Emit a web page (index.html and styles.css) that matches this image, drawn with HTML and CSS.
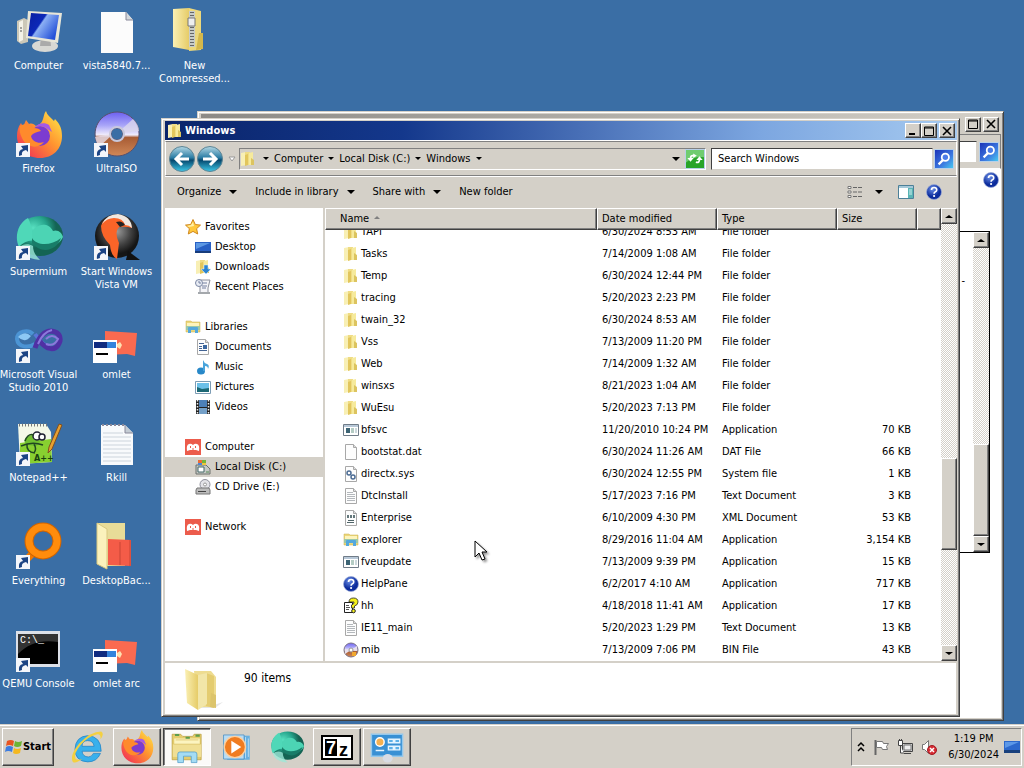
FILE: index.html
```html
<!DOCTYPE html>
<html lang="en">
<head>
    <meta charset="UTF-8">
    <meta name="viewport" content="width=device-width, initial-scale=1.0">
    <title>Windows</title>
    <link rel="stylesheet" href="styles.css">
</head>
<body>
    <!-- Shared icons -->
    <svg class="sprite" aria-hidden="true">
        <defs>
            <linearGradient id="gFolder" x1="0" x2="1"><stop offset="0" stop-color="#faf0b4"/><stop offset="1" stop-color="#e6cc68"/></linearGradient>
            <linearGradient id="gScreen" x1="0" x2="1" y2=".6"><stop offset="0" stop-color="#0a1fa0"/><stop offset=".45" stop-color="#0c28b8"/><stop offset=".5" stop-color="#8cb0f4"/><stop offset="1" stop-color="#2450d8"/></linearGradient>
            <linearGradient id="gFox" x1="1" x2="0" y2="1"><stop offset="0" stop-color="#fff04a"/><stop offset=".45" stop-color="#ff9430"/><stop offset="1" stop-color="#f0205c"/></linearGradient>
            <linearGradient id="gDisc" x2="0" y2="1"><stop offset="0" stop-color="#6c60f0"/><stop offset=".3" stop-color="#a8a4f8"/><stop offset=".52" stop-color="#f0ecfc"/><stop offset=".58" stop-color="#a85c34"/><stop offset="1" stop-color="#d08858"/></linearGradient>
            <radialGradient id="gTeal" cx=".35" cy=".3"><stop offset="0" stop-color="#58e0c0"/><stop offset=".6" stop-color="#26a58c"/><stop offset="1" stop-color="#146454"/></radialGradient>
            <radialGradient id="gDark" cx=".5" cy=".4"><stop offset="0" stop-color="#999"/><stop offset=".6" stop-color="#444"/><stop offset="1" stop-color="#151515"/></radialGradient>
            <linearGradient id="gNav" x2="0" y2="1"><stop offset="0" stop-color="#b4d8e4"/><stop offset=".45" stop-color="#2a7ca4"/><stop offset=".55" stop-color="#06486e"/><stop offset="1" stop-color="#3cc8e8"/></linearGradient>
            <linearGradient id="gFind" x2="1" y2="1"><stop offset="0" stop-color="#1c34b8"/><stop offset=".6" stop-color="#3c78e0"/><stop offset="1" stop-color="#48c8f0"/></linearGradient>
            <radialGradient id="gHelp" cx=".4" cy=".3"><stop offset="0" stop-color="#6c90e8"/><stop offset="1" stop-color="#0c2c9c"/></radialGradient>
        </defs>
        <symbol id="folder" viewBox="0 0 16 16">
            <path d="M1 2l5-1v13l-5 1z" fill="#f8efb4"/><path d="M5 1h5v13H5z" fill="#efdc84"/><path d="M9 2l4-1v13H9z" fill="#f6ea9c"/><path d="M5 4l3-1v11l-3 1z" fill="#e2c65c"/><path d="M11 7l3 2v5h-3z" fill="#dcc460"/>
        </symbol>
        <symbol id="page" viewBox="0 0 16 16"><path d="M2.500.500h8l3 3v12h-11z" fill="#fdfdfd" stroke="#a8a8a8"/><path d="M10.500.500v3h3" fill="#ddd" stroke="#a8a8a8"/></symbol>
        <symbol id="text" viewBox="0 0 16 16"><use href="#page"/><path d="M4 4.500h6M4 6.500h8M4 8.500h8M4 10.500h8M4 12.500h8" stroke="#b4b8bc"/></symbol>
        <symbol id="app" viewBox="0 0 16 16"><path d="M.500 2.500h15v11H.500z" fill="#fff" stroke="#707c88"/><path d="M1 3h14v2H1z" fill="#b8c8d8"/><path d="M3 6h4v5H3z" fill="#3c6474"/><path d="M8 6h3v5H8z" fill="#b4ccc4"/><path d="M12 6h2v5h-2z" fill="#ccd8dc"/></symbol>
        <symbol id="explorer" viewBox="0 0 16 16"><path d="M1 2h5l1 1h8v10H1z" fill="#ecd77c" stroke="#c8ac48" stroke-width=".5"/><path d="M2 4h12v4H2z" fill="#fdf4bc"/><path d="M1 7h14v4H1z" fill="#9cc8a8"/><path d="M3 14V9q0-1 1-1h8q1 0 1 1v5h-3v-3H6v3z" fill="#54a8dc"/></symbol>
        <symbol id="help" viewBox="0 0 16 16"><circle cx="8" cy="8" r="7.500" fill="url(#gHelp)" stroke="#9cacd8" stroke-width=".7"/><path d="M5.500 6q0-2.500 2.600-2.500T10.700 6q0 1.300-1.600 2-1 .5-1 1.700" fill="none" stroke="#fff" stroke-width="1.700"/><circle cx="8.100" cy="12" r="1.100" fill="#fff"/></symbol>
        <symbol id="find" viewBox="0 0 20 20"><path d="M0 0h20v20H0z" fill="url(#gFind)"/><circle cx="11.500" cy="8" r="4" fill="#4c7ce8" stroke="#fff" stroke-width="2"/><path d="M9 11l-5 5" stroke="#fff" stroke-width="2.500"/></symbol>
        <symbol id="omletTile" viewBox="0 0 16 16"><path d="M0 0h16v16H0z" fill="#ec5c4c"/><path d="M2 12q-1-6 2-7 2-1 4 1 2-2 4-1 3 1 2 7l-3-1H5z" fill="#fff"/><path d="M5.500 7v2M10.500 7v2M8 9v2" stroke="#ec5c4c"/></symbol>
        <symbol id="shortcut" viewBox="0 0 14 14"><path d="M0 0h14v14H0z" fill="#f4f6fa"/><path d="M3 13Q2 7 7 6L5 3l7-1v7L10 7Q5 8 6 12z" fill="#1c4484"/></symbol>
        <symbol id="firefox" viewBox="0 0 48 48">
            <path d="M25 47C12 47 2 38 2 25c0-5 1-9 4-13l2 4 3-7 3 4c3-1 5 0 7 2 3-1 6-3 7-7 1-3 1-6 3-8 1 4 4 6 8 10l1-2c5 5 7 10 7 17 0 13-9 22-22 22z" fill="url(#gFox)"/>
            <circle cx="25" cy="25" r="10" fill="#7c3cd0"/><path d="M5 15c4-3 11-2 14 2 3 0 6 1 7 3-4 1-8 2-10 5 1 6 8 8 13 6-6 8-18 5-22-4-2-4-3-8-2-12z" fill="#ff8a2c"/><path d="M20 16c3-4 10-5 14-2l3 7-6-4c-3-2-7-2-11-1z" fill="#a458e8"/>
        </symbol>
        <symbol id="supermium" viewBox="0 0 48 48">
            <ellipse cx="25" cy="22" rx="23" ry="20" fill="url(#gTeal)"/><path d="M13 4C3 9-1 23 4 33c6-7 15-9 23-3C16 24 18 13 13 4z" fill="#4fd8b8"/><path d="M17 20c2-10 16-13 21-3 5-2 9 2 10 6-5 12-23 12-31 4z" fill="#4cd4b4"/><path d="M17 24c5 8 19 8 29 0-4 12-19 17-29 5z" fill="#187c68"/><path d="M4 33c2 7 9 12 21 13-4-4-7-8-7-14-5-3-10-2-14 1z" fill="#9ce8d8" opacity=".8"/>
        </symbol>
        <symbol id="omlet" viewBox="0 0 48 48">
            <path d="M12 14l32 2-2 23-8-2-22 1z" fill="#fa6a50"/><path d="M0 23h24v23H0z" fill="#fff"/><path d="M1 25h13v6H1z" fill="#102c80"/><path d="M14 25h9v6h-9z" fill="#3484dc"/><path d="M3 36h12v2H3z"/><path d="M24 27l3-2 2 3-2 4-3-2z" fill="#ffe0b0"/>
        </symbol>
    </svg>

    <main class="desktop">
        <ul class="icons">
            <li><a class="shortcut" href="#"><svg viewBox="0 0 48 48"><path d="M2 13l7-3 4 2v22l-7 2-4-3z" fill="#ccc8b8"/><path d="M4 14l4-2v20l-4 2z" fill="#f4f2e8"/><path d="M5 20h2M5 23h2" stroke="#555"/><ellipse cx="30" cy="38" rx="13" ry="6" fill="#d8d8d4"/><path d="M26 29h9l1 9H25z" fill="#aaa"/><path d="M13 3l34 2-4 30-32-5z" fill="#e8e6d8"/><path d="M16 5l28 2-4 25-27-4z" fill="url(#gScreen)"/></svg>Computer</a></li>
            <li><a class="shortcut" href="#"><svg viewBox="0 0 48 48"><use href="#firefox"/><use href="#shortcut" x="1" y="32" width="14" height="14"/></svg>Firefox</a></li>
            <li><a class="shortcut" href="#"><svg viewBox="0 0 48 48"><use href="#supermium"/><use href="#shortcut" x="1" y="32" width="14" height="14"/></svg>Supermium</a></li>
            <li><a class="shortcut" href="#"><svg viewBox="0 0 48 48"><path d="M20 27C14 31 3 31 2 22 2 14 13 12 18 17" fill="none" stroke="#4c94d4" stroke-width="4"/><path d="M3 20q7-7 13-1-6 8-13 1z" fill="#8cc8f4"/><path d="M20 17q8 12 14 12" fill="none" stroke="#5878d8" stroke-width="4"/><path d="M20 31Q26 14 36 14 46 15 45 24 42 34 33 31 27 28 25 24" fill="none" stroke="#5030a4" stroke-width="5"/><path d="M31 22q6-6 12 0-4 8-12 5M23 27q5-12 14-14" fill="none" stroke="#8c78dc" stroke-width="2"/><use href="#shortcut" x="1" y="32" width="14" height="14"/></svg>Microsoft Visual Studio 2010</a></li>
            <li><a class="shortcut" href="#"><svg viewBox="0 0 48 48"><path d="M3 4h28l5 8 1 30-32 2z" fill="#f4f8e8"/><path d="M5 23l31-4 1 23-32 2z" fill="#88d030"/><path d="M4 5h28" stroke="#777" stroke-width="3" stroke-dasharray="1 2"/><path d="M10 19q6-6 11-3l4 4q0 6-6 6l-6-1q-5-2-3-6z" fill="#70c030"/><circle cx="22" cy="16" r="4" fill="#fff" stroke="#223" stroke-width="1.500"/><circle cx="27" cy="17" r="3" fill="#fff" stroke="#223" stroke-width="1.500"/><path d="M10 21q3-8 9-6M6 26q11-5 22-1M12 24q-1 8 8 9M19 24q3 5 0 9" fill="none" stroke="#214821" stroke-width="1.500"/><text x="19" y="41" font-size="9" font-weight="bold" fill="#194010">A++</text><path d="M34 27L44 4l3 1-10 24-4 4z" fill="#e8a030" stroke="#805020"/><use href="#shortcut" x="1" y="32" width="14" height="14"/></svg>Notepad++</a></li>
            <li><a class="shortcut" href="#"><svg viewBox="0 0 48 48"><path d="M19 29L5 43" stroke="#f07800" stroke-width="7"/><circle cx="28" cy="18" r="14" fill="none" stroke="#d06400" stroke-width="9"/><circle cx="28" cy="18" r="14" fill="none" stroke="#ff8c0c" stroke-width="7"/><use href="#shortcut" x="1" y="32" width="14" height="14"/></svg>Everything</a></li>
            <li><a class="shortcut" href="#"><svg viewBox="0 0 48 48"><path d="M1 5h44v36H1z" fill="#dce0e8"/><path d="M3 8h40v30H3z"/><path d="M3 8h40v8Q18 12 3 28z" fill="#333"/><text class="console" x="5" y="17">C:\_</text><use href="#shortcut" x="1" y="32" width="14" height="14"/></svg>QEMU Console</a></li>

            <li><a class="shortcut" href="#"><svg viewBox="0 0 48 48"><path d="M8 4h25l7 8v33H8z" fill="#fcfcfc"/><path d="M33 4v8h7" fill="#d4d8dc" stroke="#889"/></svg>vista5840.7...</a></li>
            <li><a class="shortcut" href="#"><svg viewBox="0 0 48 48"><path fill-rule="evenodd" d="M24 1a22 22 0 1 0 .1 0zM24 17a6 6 0 1 1-.1 0z" fill="url(#gDisc)" stroke="#58506c"/><path d="M29 18L40 8q6 6 6 12l-16 2z" fill="#dcd8ec" opacity=".8"/><path d="M18 25L6 36Q3 31 2 26l15-3z" fill="#e8e0ec" opacity=".8"/><circle cx="24" cy="23" r="7" fill="none" stroke="#c8c8dc" stroke-width="2"/><use href="#shortcut" x="1" y="32" width="14" height="14"/></svg>UltraISO</a></li>
            <li><a class="shortcut" href="#"><svg viewBox="0 0 48 48"><circle cx="24" cy="22" r="22" fill="url(#gDark)"/><path d="M8 12Q11 2 24 2q12 0 15 12-6-2-13-1-5 5 0 16l-2 16q-6-3-7-14Q8 22 8 12z" fill="#fa6428"/><path d="M9 10Q14 0 25 0q13 2 14 14-3-3-7-3-2-7-11-7-7 0-12 6z" fill="#f0e8e0"/><path d="M23 8q6-2 9 3l-5 2z" fill="#222"/><path d="M35 37l12 9H33z" fill="#111"/><use href="#shortcut" x="1" y="32" width="14" height="14"/></svg>Start Windows Vista VM</a></li>
            <li><a class="shortcut" href="#"><svg><use href="#omlet"/></svg>omlet</a></li>
            <li><a class="shortcut" href="#"><svg viewBox="0 0 48 48"><path d="M8 5h24l8 8v32H8z" fill="#f8fafc"/><path d="M32 5v8h8" fill="#c4ccd4" stroke="#889"/><path d="M10 13h20M10 17h28M10 21h28M10 25h28M10 29h28M10 33h28M10 37h28M10 41h28" stroke="#ccd4dc"/><path d="M9 5h22" stroke="#889" stroke-width="2" stroke-dasharray="2 2"/></svg>Rkill</a></li>
            <li><a class="shortcut" href="#"><svg viewBox="0 0 48 48"><path d="M4 0h28v43H12z" fill="#e8dc98"/><path d="M15 16l23 1v26l-23-1z" fill="#f45c48"/><path d="M27 19v23M37 17v26" stroke="#c84434"/><path d="M4 0l10 6v40L4 41z" fill="#fbf2bc" stroke="#d8c880"/></svg>DesktopBac...</a></li>
            <li><a class="shortcut" href="#"><svg><use href="#omlet"/></svg>omlet arc</a></li>

            <li><a class="shortcut" href="#"><svg viewBox="0 0 48 48"><path d="M2 1l16-1v42L2 39z" fill="url(#gFolder)"/><path d="M18 0l12 3v39l-12 1z" fill="#ecd87c"/><path d="M18 3h6v36h-6z" fill="#c8ccc8"/><path d="M21 4v36" stroke="#666" stroke-width="4" stroke-dasharray="1 2"/><path d="M17 10h7v8h-7z" fill="#eee" stroke="#777"/><path d="M28 25h4v16l-7 1z" fill="#d4b84c"/></svg>New Compressed...</a></li>
        </ul>

        <!-- Window behind -->
        <section class="window window-back" aria-label="Background window">
            <div class="titlebar inactive">
                <div class="controls">
                    <button aria-label="Maximize"><svg viewBox="0 0 10 10"><path d="M.500 1h9v8.500h-9zM1 2h8" fill="none" stroke="#000"/></svg></button>
                    <button class="close" aria-label="Close"><svg viewBox="0 0 10 10"><path d="M1 1l8 8M9 1L1 9" stroke="#000" stroke-width="1.600"/></svg></button>
                </div>
            </div>
            <div class="back-nav">
                <input type="search" aria-label="Search">
                <button class="find" aria-label="Search"><svg><use href="#find"/></svg></button>
            </div>
            <div class="back-body">
                <button class="plain" aria-label="Help"><svg class="ico"><use href="#help"/></svg></button>
                <div class="back-frame">
                    <span class="dash">-</span>
                    <div class="scrollbar">
                        <button aria-label="Scroll up"><i class="tri up"></i></button>
                        <span class="track"></span><span class="thumb"></span>
                        <button aria-label="Scroll down"><i class="tri"></i></button>
                    </div>
                </div>
            </div>
        </section>

        <!-- Explorer -->
        <section class="window window-front" aria-label="Windows">
            <header class="titlebar">
                <svg class="ico"><use href="#folder"/></svg>
                <h1>Windows</h1>
                <div class="controls">
                    <button aria-label="Minimize"><svg viewBox="0 0 10 10"><path d="M1 8h6" stroke="#000" stroke-width="2"/></svg></button>
                    <button aria-label="Maximize"><svg viewBox="0 0 10 10"><path d="M.500 1h9v8.500h-9zM1 2h8" fill="none" stroke="#000"/></svg></button>
                    <button class="close" aria-label="Close"><svg viewBox="0 0 10 10"><path d="M1 1l8 8M9 1L1 9" stroke="#000" stroke-width="1.600"/></svg></button>
                </div>
            </header>

            <nav class="navbar">
                <button class="round" aria-label="Back"><svg viewBox="0 0 26 26"><circle cx="13" cy="13" r="12.500" fill="url(#gNav)" stroke="#5c8494"/><path d="M20 13H7m6-6l-6 6 6 6" fill="none" stroke="#fff" stroke-width="3"/></svg></button>
                <button class="round" aria-label="Forward"><svg viewBox="0 0 26 26"><circle cx="13" cy="13" r="12.500" fill="url(#gNav)" stroke="#5c8494"/><path d="M6 13h13m-6-6l6 6-6 6" fill="none" stroke="#fff" stroke-width="3"/></svg></button>
                <button class="plain recent" aria-label="Recent pages"><svg viewBox="0 0 8 8"><path d="M1 2h6L4 6z" fill="#fff" stroke="#999"/></svg></button>
                <div class="address">
                    <svg class="ico"><use href="#folder"/></svg>
                    <i class="tri first"></i>
                    <a href="#">Computer</a><i class="tri"></i>
                    <a href="#">Local Disk (C:)</a><i class="tri"></i>
                    <a href="#">Windows</a><i class="tri"></i>
                    <button class="plain history" aria-label="Previous locations"><i class="tri big"></i></button>
                    <button class="refresh" aria-label="Refresh"><svg viewBox="0 0 20 20"><path d="M0 0h20v20H0z" fill="#28a428"/><path d="M0 0h20v8Q8 7 0 14z" fill="#70cc70"/><path d="M9 6.500Q5 5 5 10M11 13.500q4 1.500 4-3.500" fill="none" stroke="#fff" stroke-width="2"/><path d="M1.500 9h7L5 13zM11.500 11h7L15 7zM8 4l4 2.500L8 9z" fill="#fff"/></svg></button>
                </div>
                <div class="search">
                    <input type="search" placeholder="Search Windows" aria-label="Search Windows">
                    <button class="find" aria-label="Search"><svg><use href="#find"/></svg></button>
                </div>
            </nav>

            <div class="toolbar">
                <button class="plain">Organize<i class="tri big"></i></button>
                <button class="plain">Include in library<i class="tri big"></i></button>
                <button class="plain">Share with<i class="tri big"></i></button>
                <button class="plain">New folder</button>
                <div class="views">
                    <button class="plain view-mode" aria-label="Change your view"><svg class="ico" viewBox="0 0 16 16"><path d="M1 2.500h3v2H1zM1 7h3v2H1zM1 11.500h3v2H1z" fill="#fff" stroke="#777"/><path d="M6 3.500h4m1 0h4M6 8h4m1 0h4M6 12.500h4m1 0h4" stroke="#666"/></svg><i class="tri big"></i></button>
                    <button class="plain" aria-label="Show the preview pane"><svg class="ico" viewBox="0 0 16 16"><path d="M.500 1.500h15v13H.500z" fill="#fff" stroke="#4c8098"/><path d="M1 2h14v2H1z" fill="#a4c8d8"/><path d="M10 4h5v10h-5z" fill="#58b4b4"/><path d="M11 6h3M11 8h3M11 10h3" stroke="#d4f0f0"/></svg></button>
                    <button class="plain" aria-label="Help"><svg class="ico"><use href="#help"/></svg></button>
                </div>
            </div>

            <div class="panes">
                <aside class="sidebar">
                    <ul>
                        <li><a href="#"><svg class="ico" viewBox="0 0 16 16"><path d="M8 .5l2.300 5 5.200.6-3.900 3.600 1.100 5.300L8 12.400 3.300 15l1.100-5.300L.500 6.100l5.200-.6z" fill="#ffc83c" stroke="#d08820"/><path d="M8 3l1 4-5 1-2-1 4-1z" fill="#fff0a8"/></svg>Favorites</a></li>
                        <li class="child"><a href="#"><svg class="ico" viewBox="0 0 16 16"><path d="M0 3h16v11H0z" fill="#2860c4"/><path d="M1 4h14L1 10z" fill="#5c98e4"/><path d="M0 12h16v2H0z" fill="#173c7c"/></svg>Desktop</a></li>
                        <li class="child"><a href="#"><svg class="ico" viewBox="0 0 16 16"><use href="#folder"/><path d="M9 6h4v4h3l-5 5-5-5h3z" fill="#2c84d0" stroke="#d4ecfc" stroke-width=".5"/></svg>Downloads</a></li>
                        <li class="child"><a href="#"><svg class="ico" viewBox="0 0 16 16"><path d="M4 1h11l-2 8v5H5V7z" fill="#f4f4f8" stroke="#8c909c"/><circle cx="4" cy="4" r="3.500" fill="#e8ecf4" stroke="#7c88a4"/><path d="M4 2v2h2M8 4h4M7 7h5M7 9h4" stroke="#7480a0" fill="none"/><path d="M3 13h12v2H3z" fill="#a4a8ac"/></svg>Recent Places</a></li>
                    </ul>
                    <ul>
                        <li><a href="#"><svg class="ico"><use href="#explorer"/></svg>Libraries</a></li>
                        <li class="child"><a href="#"><svg class="ico" viewBox="0 0 16 16"><use href="#page"/><path d="M4 4.500h5M4 7.500h3M4 9.500h3M4 11.500h8" stroke="#446494"/><path d="M8 6h4v4H8z" fill="#3c68a0"/></svg>Documents</a></li>
                        <li class="child"><a href="#"><svg class="ico" viewBox="0 0 16 16"><ellipse cx="6" cy="12" rx="4" ry="3.500" fill="#2888c8"/><path d="M8 12V1q1 3 4 4t1 5q0-3-3-3v5z" fill="#48a4dc"/></svg>Music</a></li>
                        <li class="child"><a href="#"><svg class="ico" viewBox="0 0 16 16"><path d="M.500 2.500h15v12H.500z" fill="#fff" stroke="#7c9cb4"/><path d="M2 4h12v9H2z" fill="#6cc0e8"/><path d="M2 8l5 2 7-1v4H2z" fill="#1c6874"/></svg>Pictures</a></li>
                        <li class="child"><a href="#"><svg class="ico" viewBox="0 0 16 16"><path d="M1 1h14v14H1z" fill="#222"/><path d="M4 1h8v7H4z" fill="#4c80b8"/><path d="M4 9h8v6H4z" fill="#74a0c8"/><path d="M2.500 1v14M13.500 1v14" stroke="#eee" stroke-width="1.500" stroke-dasharray="1.500 1.500"/></svg>Videos</a></li>
                    </ul>
                    <ul>
                        <li><a href="#"><svg class="ico"><use href="#omletTile"/></svg>Computer</a></li>
                        <li class="child selected"><a href="#"><svg class="ico" viewBox="0 0 16 16"><path d="M1 6h10l4 4v5H1z" fill="#c4c8c4" stroke="#6c706c"/><path d="M3 8h6v5H3z" fill="#fff" stroke="#466"/><path d="M3 1h4v3H3z" fill="#ec6c34"/><path d="M7 1h4v3H7z" fill="#74b43c"/><path d="M3 4h4v2H3z" fill="#4c84d4"/><path d="M7 4h4v2H7z" fill="#f0c438"/><path d="M11 13h3" stroke="#585"/></svg>Local Disk (C:)</a></li>
                        <li class="child"><a href="#"><svg class="ico" viewBox="0 0 16 16"><circle cx="10" cy="5.500" r="5" fill="#e4e4e8" stroke="#90909c"/><circle cx="10" cy="5.500" r="1.500" fill="#fff" stroke="#999"/><path d="M2 9h12l1 2v4H1v-4z" fill="#bcbcbc" stroke="#777"/><path d="M3 12.500h8" stroke="#444"/></svg>CD Drive (E:)</a></li>
                    </ul>
                    <ul>
                        <li><a href="#"><svg class="ico"><use href="#omletTile"/></svg>Network</a></li>
                    </ul>
                </aside>

                <div class="list">
                    <table>
                        <colgroup><col><col class="col-mid"><col class="col-mid"><col class="col-size"><col class="col-end"></colgroup>
                        <thead>
                            <tr><th>Name<i class="tri up sort"></i></th><th>Date modified</th><th>Type</th><th>Size</th><th></th></tr>
                        </thead>
                        <tbody>
                            <tr><td><svg class="ico"><use href="#folder"/></svg>TAPI</td><td>6/30/2024 8:53 AM</td><td>File folder</td><td></td><td></td></tr>
                            <tr><td><svg class="ico"><use href="#folder"/></svg>Tasks</td><td>7/14/2009 1:08 AM</td><td>File folder</td><td></td><td></td></tr>
                            <tr><td><svg class="ico"><use href="#folder"/></svg>Temp</td><td>6/30/2024 12:44 PM</td><td>File folder</td><td></td><td></td></tr>
                            <tr><td><svg class="ico"><use href="#folder"/></svg>tracing</td><td>5/20/2023 2:23 PM</td><td>File folder</td><td></td><td></td></tr>
                            <tr><td><svg class="ico"><use href="#folder"/></svg>twain_32</td><td>6/30/2024 8:53 AM</td><td>File folder</td><td></td><td></td></tr>
                            <tr><td><svg class="ico"><use href="#folder"/></svg>Vss</td><td>7/13/2009 11:20 PM</td><td>File folder</td><td></td><td></td></tr>
                            <tr><td><svg class="ico"><use href="#folder"/></svg>Web</td><td>7/14/2009 1:32 AM</td><td>File folder</td><td></td><td></td></tr>
                            <tr><td><svg class="ico"><use href="#folder"/></svg>winsxs</td><td>8/21/2023 1:04 AM</td><td>File folder</td><td></td><td></td></tr>
                            <tr><td><svg class="ico"><use href="#folder"/></svg>WuEsu</td><td>5/20/2023 7:13 PM</td><td>File folder</td><td></td><td></td></tr>
                            <tr><td><svg class="ico"><use href="#app"/></svg>bfsvc</td><td>11/20/2010 10:24 PM</td><td>Application</td><td>70 KB</td><td></td></tr>
                            <tr><td><svg class="ico"><use href="#page"/></svg>bootstat.dat</td><td>6/30/2024 11:26 AM</td><td>DAT File</td><td>66 KB</td><td></td></tr>
                            <tr><td><svg class="ico" viewBox="0 0 16 16"><use href="#page"/><circle cx="6" cy="7" r="2" fill="none" stroke="#4c6c94" stroke-width="1.500"/><circle cx="10" cy="11" r="2" fill="none" stroke="#4c6c94" stroke-width="1.500"/></svg>directx.sys</td><td>6/30/2024 12:55 PM</td><td>System file</td><td>1 KB</td><td></td></tr>
                            <tr><td><svg class="ico"><use href="#text"/></svg>DtcInstall</td><td>5/17/2023 7:16 PM</td><td>Text Document</td><td>3 KB</td><td></td></tr>
                            <tr><td><svg class="ico" viewBox="0 0 16 16"><use href="#page"/><path d="M4 5h2v3H4zM7 5h2v3H7zM10 5h2v3h-2z" fill="#64787c"/><path d="M5 10.500h6M4 12.500h7" stroke="#506468"/></svg>Enterprise</td><td>6/10/2009 4:30 PM</td><td>XML Document</td><td>53 KB</td><td></td></tr>
                            <tr><td><svg class="ico"><use href="#explorer"/></svg>explorer</td><td>8/29/2016 11:04 AM</td><td>Application</td><td>3,154 KB</td><td></td></tr>
                            <tr><td><svg class="ico"><use href="#app"/></svg>fveupdate</td><td>7/13/2009 9:39 PM</td><td>Application</td><td>15 KB</td><td></td></tr>
                            <tr><td><svg class="ico"><use href="#help"/></svg>HelpPane</td><td>6/2/2017 4:10 AM</td><td>Application</td><td>717 KB</td><td></td></tr>
                            <tr><td><svg class="ico" viewBox="0 0 16 16"><path d="M1.500 4.500h8v10h-8z" fill="#fff" stroke="#222"/><path d="M3 7.500h3M3 9.500h4M3 11.500h3" stroke="#555"/><path d="M6 4q0-4 4.500-4T15 4q0 3-3.500 4v2H8.500V7q3-1 2.500-3H9.500z" fill="#f4f01c" stroke="#222" stroke-width=".8"/><circle cx="10.500" cy="13" r="1.800" fill="#f4f01c" stroke="#222"/></svg>hh</td><td>4/18/2018 11:41 AM</td><td>Application</td><td>17 KB</td><td></td></tr>
                            <tr><td><svg class="ico"><use href="#text"/></svg>IE11_main</td><td>5/20/2023 1:29 PM</td><td>Text Document</td><td>13 KB</td><td></td></tr>
                            <tr><td><svg class="ico" viewBox="0 0 16 16"><circle cx="8" cy="8" r="7" fill="url(#gDisc)" stroke="#7c7488"/><path d="M8 8l6-4v5zM8 8L2 12V7z" fill="#e8e0ec"/><circle cx="8" cy="8" r="2" fill="#fff" stroke="#999"/><path d="M9 10h4v4H9z" fill="#f0a830"/></svg>mib</td><td>7/13/2009 7:06 PM</td><td>BIN File</td><td>43 KB</td><td></td></tr>
                        </tbody>
                    </table>
                </div>
                <div class="scrollbar">
                    <button aria-label="Scroll up"><i class="tri up"></i></button>
                    <span class="track above"></span><span class="thumb"></span><span class="track"></span>
                    <button aria-label="Scroll down"><i class="tri"></i></button>
                </div>
            </div>

            <footer class="details">
                <svg viewBox="0 0 40 44"><path d="M30 38l9-3-8 6H12z" fill="#ccc" opacity=".5"/><path d="M10 4h17l5 6v30H14z" fill="#eedc90"/><path d="M22 6l8 3v32l-8-2z" fill="#e4cc70"/><path d="M1 2l13 6v35L3 36z" fill="url(#gFolder)"/><path d="M14 8l9-2v31l-9 6z" fill="#f2e6a8"/><path d="M27 26l5 2v13l-6-1z" fill="#dcc46c"/></svg>
                <p>90 items</p>
            </footer>
        </section>

        <svg class="cursor" viewBox="0 0 14 22"><path d="M1 1v16l4-4 3 7 3-1-3-7h5z" fill="#fff" stroke="#000"/></svg>
    </main>

    <footer class="taskbar">
        <button class="start"><svg viewBox="0 0 18 18"><path d="M2 3q4-2 7 0L8 8Q4 6 1 8z" fill="#e85420"/><path d="M10 3q3 2 7 0l-1 5q-4 2-7 0z" fill="#6cb434"/><path d="M1 9q3-2 7 0l-1 5q-4-2-7 0z" fill="#3c7ce0"/><path d="M9 10q3 2 7 0l-1 5q-4 2-7 0z" fill="#f4b820"/></svg>Start</button>
        <div class="tasks">
            <button class="task" aria-label="Internet Explorer"><svg viewBox="0 0 48 48"><path d="M43 33Q38 45 25 45 7 44 7 27 8 9 25 8q19 1 19 22H17q1 8 9 8 5 0 7-5zM17 23h17q-1-8-9-8t-8 8z" fill="#38b0ec" stroke="#1c80c4" fill-rule="evenodd"/><path d="M4 45Q-1 36 13 19 29 2 44 2q5 3-1 11 1-7-4-7-12 2-24 15Q4 34 8 41q4 2 9 0-9 7-13 4z" fill="#f4d040"/></svg></button>
            <button class="task raised" aria-label="Firefox"><svg><use href="#firefox"/></svg></button>
            <button class="task active" aria-label="Windows Explorer"><svg viewBox="0 0 48 48"><path d="M3 6h12l3 3h14l2-3h10v36H3z" fill="#e4cc6c" stroke="#b89c3c"/><path d="M6 12h36v16H6z" fill="#fcf4c0"/><path d="M4 20h40v18H4z" fill="#f0df94"/><path d="M5 20h38M8 14h32" stroke="#d8be60"/><path d="M7 7h6M22 11h6M36 8h6" stroke="#5c9c4c" stroke-width="3"/><path d="M11 46V34q0-3 3-3h21q3 0 3 3v12h-8v-9H19v9z" fill="#a4dcf4" stroke="#4898c8"/></svg></button>
            <button class="task" aria-label="Windows Media Player"><svg viewBox="0 0 48 48"><path d="M10 8h32v34H10z" fill="#68b0e0"/><path d="M36 10v30M40 12v26" stroke="#d4ecfc"/><path d="M5 7h29v34H5z" fill="#b8dcf4" stroke="#3c88c4"/><circle cx="21" cy="24" r="15" fill="#f07c20" stroke="#fcd0a0" stroke-width="2"/><path d="M16 15l14 9-14 9z" fill="#fff"/></svg></button>
            <button class="task" aria-label="Supermium"><svg><use href="#supermium"/></svg></button>
            <button class="task raised" aria-label="7-Zip"><svg viewBox="0 0 34 34"><path d="M1 5h32v25H1z"/><path d="M3 7h28v21H3z" fill="#fff"/><path d="M5 9h12v17H5z"/><text class="zip" x="6" y="24" fill="#fff">7</text><text class="zip" x="19" y="26">z</text></svg></button>
            <button class="task raised" aria-label="Control Panel"><svg viewBox="0 0 48 48"><path d="M2 6h44v31H2z" fill="#3890d4" stroke="#94c8ec" stroke-width="2"/><circle cx="14" cy="17" r="6" fill="#f4b050" stroke="#fff" stroke-width="2"/><path d="M26 13h7v5h-7zM35 13h7v5h-7zM26 23h7v5h-7zM35 23h7v5h-7zM8 29h12" fill="#5cb0e8" stroke="#e4f4ff" stroke-width="2"/><ellipse cx="25" cy="40" rx="7" ry="6" fill="#d8dce4"/></svg></button>
        </div>
        <div class="tray">
            <button class="plain" aria-label="Show hidden icons"><svg class="chev" viewBox="0 0 8 10"><path d="M1 4l3-3 3 3M1 9l3-3 3 3" fill="none" stroke="#000" stroke-width="1.500"/></svg></button>
            <svg class="ico" viewBox="0 0 16 16"><path d="M2.500 1v15" stroke="#666" stroke-width="2"/><path d="M3.500 2.500h6l1 2h5l-2 3 1 3h-5l-1-2h-5z" fill="#fff" stroke="#777"/></svg>
            <svg class="ico" viewBox="0 0 16 16"><path d="M5.500 4.500h10v8h-10z" fill="#ccc" stroke="#444"/><path d="M7 6h7v5H7z" fill="#eee" stroke="#777"/><path d="M7 14.500h7" stroke="#444"/><path d="M1.500 1.500h4v5h-4zM3.500 7v7H7M2.500 0v2M4.500 0v2" fill="#fff" stroke="#444"/></svg>
            <svg class="ico" viewBox="0 0 16 16"><path d="M1.500 5.500h2l4-4v13l-4-4h-2z" fill="#fff" stroke="#777"/><circle cx="11" cy="11" r="4.500" fill="#d82c34" stroke="#a01820"/><path d="M9 9l4 4M13 9l-4 4" stroke="#fff" stroke-width="1.500"/></svg>
            <time datetime="2024-06-30T13:19">1:19 PM<br>6/30/2024</time>
            <button class="plain" aria-label="Show desktop"><svg class="ico" viewBox="0 0 16 16"><path d="M0 2h16v10H0z" fill="#2c68cc"/><path d="M1 3h14L1 9z" fill="#5c98e8"/><path d="M0 11h16v3H0z" fill="#18407c"/></svg></button>
        </div>
    </footer>
</body>
</html>
```

FILE: styles.css
```css
* {
    box-sizing: border-box;
}

body {
    margin: 0;
    height: 100vh;
    display: flex;
    flex-direction: column;
    overflow: hidden;
    background: #3a6ea5;
    color: #000;
    font: 11px/14px "DejaVu Sans Condensed", "Noto Sans", sans-serif;
}

button,
input {
    font: inherit;
    color: inherit;
    margin: 0;
    padding: 0;
    border-radius: 0;
}

a {
    color: inherit;
    text-decoration: none;
}

ul {
    list-style: none;
    margin: 0;
    padding: 0;
}

svg {
    display: block;
    flex: none;
    overflow: visible;
}

.sprite {
    position: absolute;
    width: 0;
    height: 0;
}

.ico {
    width: 16px;
    height: 16px;
}

.plain {
    display: flex;
    align-items: center;
    background: none;
    border: none;
}

/* small arrows */
.tri {
    flex: none;
    border: 3px solid transparent;
    border-top-color: #000;
    border-bottom: none;
}

.tri.big {
    border-width: 4px 4px 0;
}

.tri.up {
    border-top: none;
    border-bottom: 3px solid #000;
}

/* Desktop */
.desktop {
    position: relative;
    flex: 1;
    min-height: 0;
}

.icons {
    display: grid;
    grid-template-rows: repeat(7, 103px);
    grid-auto-columns: 77px;
    grid-auto-flow: column;
    column-gap: 1px;
}

.shortcut {
    display: flex;
    flex-direction: column;
    align-items: center;
    gap: 3px;
    padding-top: 8px;
    margin: 0 -5px;
    color: #fff;
    line-height: 13px;
    text-align: center;
}

.shortcut svg {
    width: 48px;
    height: 48px;
}

.console {
    fill: #fff;
    font: 10px "Liberation Mono", monospace;
}

.zip {
    font: bold 18px "Liberation Sans", sans-serif;
}

/* Windows */
.window {
    position: absolute;
    display: flex;
    flex-direction: column;
    padding: 2px;
    background: #d4d0c8;
    border: 1px solid;
    border-color: #d4d0c8 #404040 #404040 #d4d0c8;
    box-shadow: inset 1px 1px #fff, inset -1px -1px #808080;
}

.window-front {
    top: 118px;
    right: 64px;
    bottom: 7px;
    left: 161px;
}

.window-back {
    top: 111px;
    right: 20px;
    bottom: 3px;
    left: 197px;
}

.titlebar {
    display: flex;
    align-items: center;
    gap: 2px;
    height: 20px;
    padding: 0 2px;
    margin: 0 0 0 1px;
    background: linear-gradient(to right, #0a246a, #14388c 30%, #7ca6e0 75%, #a6caf0);
    border-bottom: 1px solid #fff;
}

.titlebar h1 {
    flex: 1;
    margin: 0;
    color: #fff;
    font-size: 11px;
    font-weight: bold;
}

.titlebar.inactive {
    justify-content: flex-end;
    background: linear-gradient(to right, #8c8a86, #d4d0c8);
    border-bottom: none;
}

.controls {
    display: flex;
}

.controls button,
.scrollbar button,
.start,
.task.raised {
    background: #d4d0c8;
    border: 1px solid;
    border-color: #fff #404040 #404040 #fff;
    box-shadow: inset -1px -1px #808080;
}

.controls button {
    display: grid;
    place-items: center;
    width: 16px;
    height: 15px;
}

.controls .close {
    margin-left: 2px;
}

.controls svg {
    width: 10px;
    height: 10px;
}

.find,
.refresh {
    width: 20px;
    height: 20px;
    border: 1px solid #b8d0e8;
    background: none;
}

.find svg,
.refresh svg {
    width: 100%;
    height: 100%;
}

input[type="search"] {
    min-width: 0;
    height: 22px;
    padding: 0 6px;
    background: #fff;
    border: 1px solid;
    border-color: #404040 #d4d0c8 #d4d0c8 #404040;
    appearance: none;
}

input::placeholder {
    color: #000;
    opacity: 1;
}

/* Back window */
.back-nav {
    display: flex;
    justify-content: flex-end;
    align-items: center;
    gap: 2px;
    height: 35px;
    padding-right: 1px;
    border: 1px solid;
    border-color: #808080 #808080 #fff #fff;
}

.back-body {
    display: flex;
    flex-direction: column;
    align-items: flex-end;
    flex: 1;
    padding: 3px 2px 165px 0;
    background: #fff;
}

.back-frame {
    display: flex;
    justify-content: flex-end;
    flex: 1;
    align-self: stretch;
    margin: 43px 9px 0 0;
    border: 1px solid #000;
}

.dash {
    padding: 42px 8px 0 0;
}

/* Explorer navigation */
.navbar {
    display: flex;
    align-items: center;
    height: 35px;
    padding: 0 2px 0 3px;
    margin-left: 1px;
    border: 1px solid;
    border-color: #808080 #fff #808080 #fff;
    box-shadow: 0 1px #fff;
}

.round {
    width: 26px;
    height: 26px;
    margin-right: 2px;
    border: none;
    background: none;
}

.recent {
    width: 14px;
    justify-content: center;
}

.recent svg {
    width: 8px;
    height: 8px;
}

.address {
    display: flex;
    align-items: center;
    flex: 1;
    height: 22px;
    margin-right: 5px;
    border: 1px solid;
    border-color: #808080 #fff #fff #808080;
}

.address .tri {
    margin: 0 5px;
}

.address .tri.first {
    margin-left: 7px;
}

.address .history {
    margin-left: auto;
}

.search {
    display: flex;
    align-items: center;
    gap: 1px;
    flex: 0 0 243px;
}

.search input {
    flex: 1;
}

.toolbar {
    display: flex;
    align-items: center;
    gap: 18px;
    height: 32px;
    padding: 0 15px 0 13px;
}

.toolbar .plain {
    gap: 8px;
}

.views {
    display: flex;
    gap: 12px;
    margin-left: auto;
}

.views .view-mode {
    gap: 12px;
    margin-right: 3px;
}

/* Panes */
.panes {
    display: flex;
    flex: 1;
    min-height: 0;
    margin-left: 1px;
}

.sidebar {
    flex: 0 0 158px;
    padding-top: 9px;
    margin-right: 2px;
    background: #fff;
}

.sidebar ul {
    margin-bottom: 20px;
}

.sidebar a {
    display: flex;
    align-items: center;
    gap: 4px;
    height: 20px;
    padding-left: 20px;
}

.sidebar .child a {
    padding-left: 30px;
}

.sidebar .selected {
    background: #d4d0c8;
}

.list {
    display: flex;
    flex-direction: column-reverse;
    flex: 1;
    min-width: 0;
    overflow: hidden;
    background: #fff;
}

table {
    flex: none;
    width: 100%;
    table-layout: fixed;
    border-collapse: separate;
    border-spacing: 0;
}

.col-mid {
    width: 120px;
}

.col-size {
    width: 80px;
}

.col-end {
    width: 24px;
}

th {
    position: sticky;
    top: 0;
    z-index: 1;
    height: 22px;
    padding: 0 0 0 4px;
    background: #d4d0c8;
    border: 1px solid;
    border-color: #fff #404040 #404040 #fff;
    box-shadow: inset -1px -1px #808080;
    font-weight: normal;
    text-align: left;
}

th:first-child {
    padding-left: 14px;
}

.sort {
    display: inline-block;
    margin: 0 0 3px 5px;
}

.tri.sort {
    border-bottom-color: #808080;
}

td {
    height: 22px;
    padding: 0 0 0 5px;
    white-space: nowrap;
}

td:first-child {
    display: flex;
    align-items: center;
    gap: 2px;
    padding-left: 18px;
}

td:nth-child(4) {
    padding-right: 6px;
    text-align: right;
}

/* Scrollbars */
.scrollbar {
    display: flex;
    flex-direction: column;
    flex: 0 0 16px;
}

.scrollbar button {
    display: grid;
    place-items: center;
    height: 16px;
}

.scrollbar .tri {
    border-left-width: 4px;
    border-right-width: 4px;
}

.track {
    flex: 95;
    background: repeating-conic-gradient(#fff 0 25%, #d4d0c8 0 50%) 0 0 / 2px 2px;
}

.track.above {
    flex: 235;
}

.window-back .track {
    flex: 195;
}

.thumb {
    flex: 90;
    background: #d4d0c8;
    border: 1px solid;
    border-color: #fff #404040 #404040 #fff;
    box-shadow: inset -1px -1px #808080;
}

.details {
    display: flex;
    gap: 20px;
    height: 51px;
    padding: 4px 19px;
    margin: 2px 1px 0;
    background: #fff;
}

.details svg {
    width: 40px;
    height: 44px;
}

.details p {
    margin: 4px 0 0;
    font-size: 12px;
}

.cursor {
    position: absolute;
    left: 474px;
    top: 540px;
    width: 14px;
    height: 22px;
    filter: drop-shadow(2px 2px 1px rgba(0, 0, 0, 0.4));
}

/* Taskbar */
.taskbar {
    display: flex;
    align-items: center;
    height: 44px;
    padding: 1px 2px 0;
    background: #d4d0c8;
    border-top: 1px solid #d4d0c8;
    box-shadow: inset 0 1px #fff;
}

.start {
    display: flex;
    align-items: center;
    justify-content: center;
    width: 52px;
    height: 38px;
    font-weight: bold;
}

.start svg {
    width: 18px;
    height: 18px;
}

.tasks {
    display: flex;
    gap: 2px;
    flex: 1;
    margin-left: 9px;
}

.task {
    display: grid;
    place-items: center;
    width: 48px;
    height: 38px;
    border: 1px solid transparent;
    background: none;
}

.task svg {
    width: 34px;
    height: 34px;
}

.task.active {
    background: #fbfaf8;
    border-color: #404040 #fff #fff #404040;
    box-shadow: inset 1px 1px #808080;
}

.tray {
    display: flex;
    align-items: center;
    gap: 8px;
    height: 38px;
    padding: 0 1px 0 5px;
    border: 1px solid;
    border-color: #808080 #fff #fff #808080;
}

.chev {
    width: 8px;
    height: 10px;
}

.tray time {
    margin: 0 -3px 0 3px;
    line-height: 16px;
    text-align: center;
}
```
